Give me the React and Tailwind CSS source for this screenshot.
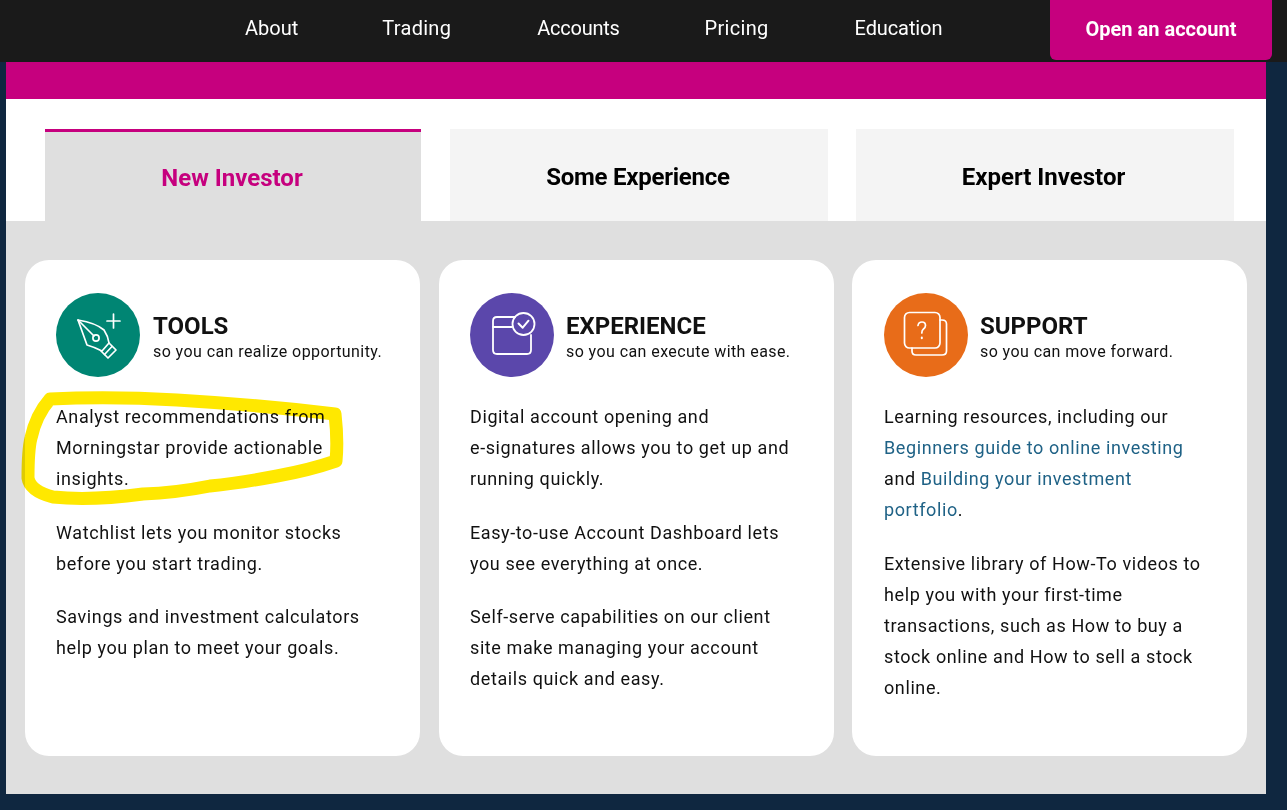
import React from "react";

function PenIcon() {
  return (
    <svg width="84" height="84" viewBox="0 0 84 84" fill="none" stroke="#fff" strokeWidth="1.7" strokeLinejoin="round" strokeLinecap="round">
      <path d="M22 27 Q40 30 48 37 Q52 43 53 50 L46 58 Q38 54 31 52 Q27 41 22 27 Z" />
      <path d="M22 27 L38 43" />
      <circle cx="40" cy="45" r="3.1" />
      <path d="M53 50 L60 57 L52 65 L45 58" />
      <path d="M56 53.5 L48.5 61.5" />
      <path d="M57.5 21 V35 M51 28 H64" />
    </svg>
  );
}

function CalIcon() {
  return (
    <svg width="84" height="84" viewBox="0 0 84 84" fill="none" stroke="#fff" strokeWidth="1.8" strokeLinejoin="round" strokeLinecap="round">
      <path d="M45 24 H27 Q23 24 23 28 V57 Q23 61 27 61 H57 Q61 61 61 57 V42" />
      <path d="M23 34 H42" />
      <circle cx="53.5" cy="31" r="11" />
      <path d="M48.5 30.5 L52.7 34.7 L58.5 27.7" strokeWidth="2" />
    </svg>
  );
}

function HelpIcon() {
  return (
    <svg width="84" height="84" viewBox="0 0 84 84" fill="none" stroke="#fff" strokeWidth="1.7" strokeLinejoin="round" strokeLinecap="round">
      <rect x="20.5" y="19.5" width="35.5" height="35.5" rx="5" />
      <path d="M56 27 H58 Q62.5 27 62.5 31 V58 Q62.5 62 58 62 H32 Q28 62 28 58 V55" />
      <path d="M34 32.5 Q34.5 29 38 29 Q41.5 29 41.5 32.5 Q41.5 34.5 39.5 36 Q37.8 37.3 37.8 40" />
      <path d="M37.8 44.5 V45.2" strokeWidth="2" />
    </svg>
  );
}

function Card({ color, icon, title, sub, pad, gap, children }) {
  return (
    <div className={`w-[395px] shrink-0 h-[496px] bg-white rounded-[24px] pt-[33px] pr-[36px] ${pad}`}>
      <div className={`flex items-center h-[84px] -mr-[20px] ${gap}`}>
        <div className={`w-[84px] h-[84px] rounded-full shrink-0 ${color}`}>{icon}</div>
        <div className="pt-[3px]">
          <div className="text-[24px] leading-[28px] font-bold text-[#111]">{title}</div>
          <div className="text-[16px] leading-[20px] tracking-[0.42px] text-[#111] mt-[2px]">{sub}</div>
        </div>
      </div>
      <div className="mt-[24px] flex flex-col gap-[22.6px] text-[18px] leading-[31px] tracking-[0.6px] text-[#111]">{children}</div>
    </div>
  );
}

export default function App() {
  const nav = [
    ["About", ""],
    ["Trading", "ml-[84px] tracking-[0.3px]"],
    ["Accounts", "ml-[86px] tracking-[-0.25px]"],
    ["Pricing", "ml-[85px] tracking-[0.3px]"],
    ["Education", "ml-[86px] tracking-[-0.1px]"],
  ];
  return (
    <div className="relative w-[1287px] h-[810px] overflow-hidden bg-[#0f2740] font-['Roboto',sans-serif]">
      <header className="h-[62px] bg-[#1a1a1a] flex items-start pl-[245px] pr-[15px]">
        <nav className="flex items-center h-[56px] text-[20px] text-white">
          {nav.map(([n, c]) => (
            <span key={n} className={c}>{n}</span>
          ))}
        </nav>
        <div className="ml-auto w-[222px] h-[60px] pb-[2px] bg-[#c6007e] rounded-b-[6px] flex items-center justify-center text-white text-[20px] font-bold">
          Open an account
        </div>
      </header>
      <main className="mx-[6px] w-[1260px] h-[732px]">
        <div className="h-[37px] bg-[#c6007e]" />
        <div className="h-[122px] bg-white pt-[30px] pl-[39px] flex items-stretch">
          <div className="w-[376px] bg-[#dfdfdf] border-t-[3px] border-[#c6007e] flex items-center justify-center pt-[2px] pr-[2px] text-[24px] font-bold text-[#c6007e]">
            New Investor
          </div>
          <div className="ml-[29px] w-[378px] bg-[#f4f4f4] flex items-center justify-center pt-[3px] pr-[2px] text-[24px] tracking-[-0.25px] font-bold text-black">
            Some Experience
          </div>
          <div className="ml-[28px] w-[378px] bg-[#f4f4f4] flex items-center justify-center pt-[3px] pr-[3px] text-[24px] font-bold text-black">
            Expert Investor
          </div>
        </div>
        <div className="h-[573px] bg-[#dfdfdf] pt-[39px] pl-[19px] flex">
          <Card color="bg-[#008573]" icon={<PenIcon />} title="TOOLS" sub="so you can realize opportunity." pad="pl-[31px]" gap="gap-[13px]">
            <p>Analyst recommendations from Morningstar provide actionable insights.</p>
            <p>Watchlist lets you monitor stocks before you start trading.</p>
            <p>Savings and investment calculators help you plan to meet your goals.</p>
          </Card>
          <div className="w-[19px] shrink-0" />
          <Card color="bg-[#5b47ab]" icon={<CalIcon />} title="EXPERIENCE" sub="so you can execute with ease." pad="pl-[31px]" gap="gap-[12px]">
            <p>Digital account opening and<br />e-signatures allows you to get up and running quickly.</p>
            <p>Easy-to-use Account Dashboard lets you see everything at once.</p>
            <p>Self-serve capabilities on our client site make managing your account details quick and easy.</p>
          </Card>
          <div className="w-[18px] shrink-0" />
          <Card color="bg-[#e86c19]" icon={<HelpIcon />} title="SUPPORT" sub="so you can move forward." pad="pl-[32px]" gap="gap-[12px]">
            <p>
              Learning resources, including our <span className="text-[#1f6286]">Beginners guide to online investing</span> and{" "}
              <span className="text-[#1f6286]">Building your investment portfolio</span>.
            </p>
            <p>Extensive library of How-To videos to help you with your first-time transactions, such as How to buy a stock online and How to sell a stock online.</p>
          </Card>
        </div>
      </main>
      <svg className="absolute left-0 top-0 pointer-events-none mix-blend-multiply" width="1287" height="810" fill="none">
        <path
          d="M50 399 Q110 396 177 400 Q260 405 335 414 Q338 440 336 461 Q310 470 277 476 Q240 483 210 486 Q175 493 143 494 Q90 501 53 497 Q30 491 28 478 Q28 450 31 438 Q36 415 50 399 Z"
          stroke="#ffe800"
          strokeWidth="13"
          strokeLinejoin="round"
        />
      </svg>
    </div>
  );
}
